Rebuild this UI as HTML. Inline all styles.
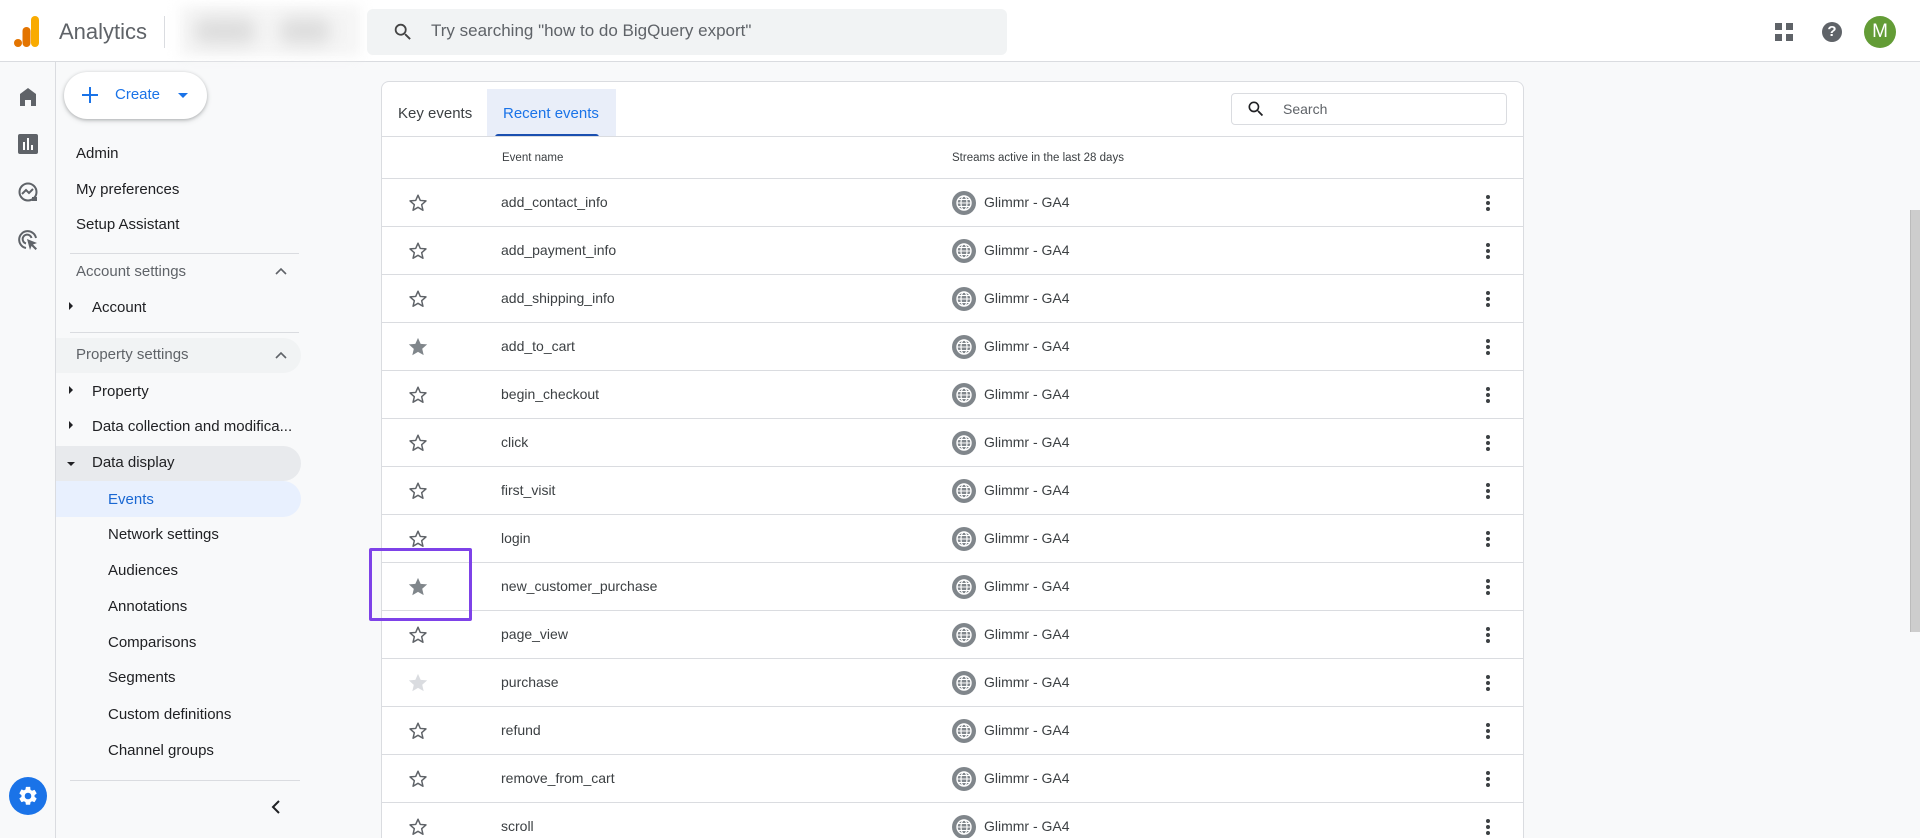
<!DOCTYPE html>
<html style="width:1920px;height:838px;overflow:hidden"><head><meta charset="utf-8"><style>
*{box-sizing:border-box;margin:0;padding:0}
body{width:1920px;height:838px;overflow:hidden;background:#f8f9fa;font-family:"Liberation Sans",Arial,sans-serif;color:#202124;position:relative}
.abs{position:absolute}
#hdr{left:0;top:0;width:1920px;height:62px;background:#fff;border-bottom:1px solid #dadce0}
.rail{left:0;top:62px;width:56px;height:776px;border-right:1px solid #dadce0;background:#f8f9fa}
.mi{position:absolute;left:76px;font-size:15px;color:#202124;line-height:20px}
.sub{left:92px}.subsub{left:108px}
.gr{color:#5f6368}
.arr{position:absolute;left:69px;width:0;height:0}
.div{position:absolute;left:70px;width:229px;height:1px;background:#dadce0}
.card{left:381px;top:81px;width:1143px;height:757px;background:#fff;border:1px solid #dadce0;border-bottom:none;border-radius:8px 8px 0 0;overflow:hidden}
.row{position:absolute;left:0;width:1141px;height:48px;border-top:1px solid #dadce0}
.row .st{position:absolute;left:25px;top:13px}
.row .nm{position:absolute;left:119px;top:15px;font-size:14px;color:#3c4043}
.row .gl{position:absolute;left:570px;top:12px}
.row .sn{position:absolute;left:602px;top:15px;font-size:14px;color:#3c4043}
.row .kb{position:absolute;left:1103px;top:14px}
</style></head><body>
<div id="hdr" class="abs">
  <svg class="abs" style="left:14px;top:16px" width="26" height="32" viewBox="0 0 26 32"><rect x="17" y="0" width="8" height="31" rx="4" fill="#f9ab00"/><rect x="8.5" y="11" width="8" height="20" rx="4" fill="#e37400"/><circle cx="4" cy="27" r="4" fill="#e37400"/></svg>
  <div class="abs" style="left:59px;top:19px;font-size:22px;color:#5f6368">Analytics</div>
  <div class="abs" style="left:164px;top:16px;width:1px;height:32px;background:#dadce0"></div>
  <div class="abs" style="left:180px;top:6px;width:180px;height:50px;background:#f5f5f5;filter:blur(6px)"></div>
  <div class="abs" style="left:195px;top:18px;width:60px;height:26px;background:#ddd;filter:blur(8px);border-radius:10px"></div>
  <div class="abs" style="left:280px;top:18px;width:50px;height:26px;background:#ddd;filter:blur(8px);border-radius:10px"></div>
  <div class="abs" style="left:367px;top:9px;width:640px;height:46px;background:#f1f3f4;border-radius:6px"></div>
  <svg class="abs" style="left:392px;top:21px" width="22" height="22" viewBox="0 0 24 24"><path fill="#444" d="M15.5 14h-.79l-.28-.27A6.47 6.47 0 0016 9.5 6.5 6.5 0 109.5 16c1.61 0 3.09-.59 4.23-1.57l.27.28v.79l5 4.99L20.49 19l-4.99-5zm-6 0C7.01 14 5 11.99 5 9.5S7.01 5 9.5 5 14 7.01 14 9.5 11.99 14 9.5 14z"/></svg>
  <div class="abs" style="left:431px;top:21px;font-size:17px;color:#5f6368">Try searching "how to do BigQuery export"</div>
  <svg class="abs" style="left:1774px;top:22px" width="20" height="20" viewBox="0 0 20 20"><rect x="1" y="1" width="7" height="7" fill="#5f6368"/><rect x="12" y="1" width="7" height="7" fill="#5f6368"/><rect x="1" y="12" width="7" height="7" fill="#5f6368"/><rect x="12" y="12" width="7" height="7" fill="#5f6368"/></svg>
  <div class="abs" style="left:1822px;top:22px;width:20px;height:20px;border-radius:50%;background:#5f6368;color:#fff;font-size:15px;font-weight:bold;text-align:center;line-height:20px">?</div>
  <div class="abs" style="left:1864px;top:16px;width:32px;height:32px;border-radius:50%;background:#639c36;color:#fff;font-size:19px;text-align:center;line-height:32px">M</div>
</div>
<div class="abs rail">
  <svg class="abs" style="left:18px;top:25px" width="20" height="20" viewBox="0 0 20 20"><path fill="#5f6368" d="M10 1L2 7v12h5v-6h6v6h5V7z"/></svg>
  <svg class="abs" style="left:18px;top:72px" width="20" height="20" viewBox="0 0 20 20"><rect x="0" y="0" width="20" height="20" rx="2" fill="#5f6368"/><rect x="5" y="8" width="2" height="8" fill="#fff"/><rect x="9" y="4" width="2" height="12" fill="#fff"/><rect x="13" y="11" width="2" height="5" fill="#fff"/></svg>
  <svg class="abs" style="left:17px;top:119px" width="22" height="22" viewBox="0 0 22 22"><circle cx="11" cy="11" r="8.5" fill="none" stroke="#5f6368" stroke-width="2"/><path d="M5 13l4-4 3 3 4-4" fill="none" stroke="#5f6368" stroke-width="2"/><rect x="15" y="16" width="5" height="4" fill="#5f6368"/></svg>
  <svg class="abs" style="left:17px;top:167px" width="22" height="22" viewBox="0 0 22 22"><path d="M19 9A8.5 8.5 0 1 0 9 19" fill="none" stroke="#5f6368" stroke-width="2"/><path d="M14.5 9A4.5 4.5 0 1 0 9 14.5" fill="none" stroke="#5f6368" stroke-width="2"/><path fill="#5f6368" d="M10 10l10 4-4 1.5 4 4-1.5 1.5-4-4L13 21z"/></svg>
  <div class="abs" style="left:9px;top:715px;width:38px;height:38px;border-radius:50%;background:#1a73e8"></div>
  <svg class="abs" style="left:17px;top:723px" width="22" height="22" viewBox="0 0 24 24"><path fill="#fff" d="M19.14 12.94a7.07 7.07 0 000-1.88l2.03-1.58a.49.49 0 00.12-.61l-1.920-3.32a.49.49 0 00-.59-.22l-2.39.96a7.03 7.03 0 00-1.62-.94l-.36-2.54A.48.48 0 0013.93 2h-3.84a.48.48 0 00-.48.41l-.36 2.54c-.59.24-1.13.57-1.62.94l-2.39-.96a.48.48 0 00-.59.22L2.73 8.870a.48.48 0 00.12.61l2.03 1.58a7.07 7.07 0 000 1.88l-2.03 1.58a.49.49 0 00-.12.61l1.92 3.32c.12.22.37.29.59.22l2.39-.96c.5.38 1.03.7 1.62.94l.36 2.54c.05.24.24.41.48.41h3.84c.24 0 .44-.17.47-.41l.36-2.54c.59-.24 1.13-.56 1.62-.94l2.39.96c.22.08.47 0 .59-.22l1.92-3.32a.49.49 0 00-.12-.61l-2.010-1.58zM12 15.6A3.6 3.6 0 1112 8.4a3.6 3.6 0 010 7.2z"/></svg>
</div>
<div class="abs" style="left:64px;top:72px;width:143px;height:47px;background:#fff;border-radius:24px;box-shadow:0 1px 3px rgba(60,64,67,.3),0 2px 6px rgba(60,64,67,.15)"></div>
<svg class="abs" style="left:81px;top:86px" width="18" height="18" viewBox="0 0 18 18"><path d="M9 1v16M1 9h16" stroke="#1a73e8" stroke-width="2"/></svg>
<div class="abs" style="left:115px;top:86px;font-size:15px;color:#1a73e8">Create</div>
<div class="abs" style="left:178px;top:93px;width:0;height:0;border-left:5px solid transparent;border-right:5px solid transparent;border-top:5px solid #1a73e8"></div>

<div class="abs" style="left:56px;top:338px;width:245px;height:35px;background:#f1f3f4;border-radius:0 18px 18px 0"></div>
<div class="abs" style="left:56px;top:446px;width:245px;height:35px;background:#e8eaed;border-radius:0 18px 18px 0"></div>
<div class="abs" style="left:56px;top:481px;width:245px;height:36px;background:#e8f0fe;border-radius:0 18px 18px 0"></div>

<div class="mi" style="top:144px">Admin</div>
<div class="mi" style="top:180px">My preferences</div>
<div class="mi" style="top:215px">Setup Assistant</div>
<div class="div" style="top:253px"></div>
<div class="mi gr" style="top:262px">Account settings</div>
<svg class="abs" style="left:275px;top:267px" width="12" height="8" viewBox="0 0 12 8"><path d="M1 7l5-5 5 5" fill="none" stroke="#5f6368" stroke-width="1.6"/></svg>
<div class="arr" style="top:302px;border-top:4px solid transparent;border-bottom:4px solid transparent;border-left:4px solid #202124"></div>
<div class="mi sub" style="top:298px">Account</div>
<div class="div" style="top:332px"></div>
<div class="mi gr" style="top:345px">Property settings</div>
<svg class="abs" style="left:275px;top:351px" width="12" height="8" viewBox="0 0 12 8"><path d="M1 7l5-5 5 5" fill="none" stroke="#5f6368" stroke-width="1.6"/></svg>
<div class="arr" style="top:386px;border-top:4px solid transparent;border-bottom:4px solid transparent;border-left:4px solid #202124"></div>
<div class="mi sub" style="top:382px">Property</div>
<div class="arr" style="top:421px;border-top:4px solid transparent;border-bottom:4px solid transparent;border-left:4px solid #202124"></div>
<div class="mi sub" style="top:417px">Data collection and modifica...</div>
<div class="arr" style="top:462px;left:67px;border-left:4px solid transparent;border-right:4px solid transparent;border-top:4px solid #202124"></div>
<div class="mi sub" style="top:453px">Data display</div>
<div class="mi subsub" style="top:490px;color:#1967d2">Events</div>
<div class="mi subsub" style="top:525px">Network settings</div>
<div class="mi subsub" style="top:561px">Audiences</div>
<div class="mi subsub" style="top:597px">Annotations</div>
<div class="mi subsub" style="top:633px">Comparisons</div>
<div class="mi subsub" style="top:668px">Segments</div>
<div class="mi subsub" style="top:705px">Custom definitions</div>
<div class="mi subsub" style="top:741px">Channel groups</div>
<div class="div" style="top:780px;width:230px"></div>
<svg class="abs" style="left:270px;top:799px" width="12" height="16" viewBox="0 0 12 16"><path d="M9 2L3 8l6 6" fill="none" stroke="#202124" stroke-width="2"/></svg>

<div class="abs card">
  <div class="abs" style="left:16px;top:23px;font-size:15px;color:#3c4043">Key events</div>
  <div class="abs" style="left:105px;top:7px;width:129px;height:48px;background:#e9eef9"></div>
  <div class="abs" style="left:121px;top:23px;font-size:15px;color:#1a73e8">Recent events</div>
  <div class="abs" style="left:113px;top:52px;width:104px;height:3px;background:#1a4fb0;border-radius:3px 3px 0 0"></div>
  <div class="abs" style="left:849px;top:11px;width:276px;height:32px;border:1px solid #dadce0;border-radius:4px"></div>
  <svg class="abs" style="left:864px;top:17px" width="20" height="20" viewBox="0 0 24 24"><path fill="#202124" d="M15.5 14h-.79l-.28-.27A6.47 6.47 0 0016 9.5 6.5 6.5 0 109.5 16c1.61 0 3.09-.59 4.23-1.57l.27.28v.79l5 4.99L20.49 19l-4.99-5zm-6 0C7.01 14 5 11.99 5 9.5S7.01 5 9.5 5 14 7.01 14 9.5 11.99 14 9.5 14z"/></svg>
  <div class="abs" style="left:901px;top:19px;font-size:14px;color:#5f6368">Search</div>
  <div class="abs" style="left:0;top:54px;width:1141px;height:1px;background:#dadce0"></div>
  <div class="abs" style="left:120px;top:70px;font-size:11.5px;color:#3c4043">Event name</div>
  <div class="abs" style="left:570px;top:70px;font-size:11.5px;color:#3c4043">Streams active in the last 28 days</div>
  <div id="rows"></div>
</div>
<div class="abs" style="left:369px;top:548px;width:103px;height:73px;border:3px solid #7e42e8;border-radius:2px"></div>
<div class="abs" style="left:1910px;top:210px;width:10px;height:422px;background:#cdcdcd;border-left:1px solid #bbb"></div>

<svg width="0" height="0" style="position:absolute"><defs>
<path id="star" d="M12 2l2.9 6.6 7.1.6-5.4 4.7 1.6 7L12 17.3 5.8 21l1.6-7L2 9.2l7.1-.6z"/>
</defs></svg>
<script>
var names=[["add_contact_info",0],["add_payment_info",0],["add_shipping_info",0],["add_to_cart",1],["begin_checkout",0],["click",0],["first_visit",0],["login",0],["new_customer_purchase",1],["page_view",0],["purchase",2],["refund",0],["remove_from_cart",0],["scroll",0]];
var h="";
names.forEach(function(n,i){
 var st=n[1]==0?'<path d="M12 3.5l2.5 5.7 6.2.5-4.7 4.1 1.4 6.1L12 16.7 6.6 19.9 8 13.8 3.3 9.7l6.2-.5z" fill="none" stroke="#5f6368" stroke-width="1.6" stroke-linejoin="round"/>':'<use href="#star" fill="'+(n[1]==1?'#80868b':'#dadce0')+'"/>';
 h+='<div class="row" style="top:'+(96+48*i)+'px"><svg class="st" width="22" height="22" viewBox="0 0 24 24">'+st+'</svg><div class="nm">'+n[0]+'</div>'+
 '<svg class="gl" width="24" height="24" viewBox="0 0 24 24"><circle cx="12" cy="12" r="12" fill="#80868b"/><circle cx="12" cy="12" r="7" fill="none" stroke="#fff" stroke-width="1.4"/><ellipse cx="12" cy="12" rx="3" ry="7" fill="none" stroke="#fff" stroke-width="1.2"/><path d="M5 12h14M6 8.5h12M6 15.5h12" stroke="#fff" stroke-width="1.1"/></svg>'+
 '<div class="sn">Glimmr - GA4</div><svg class="kb" width="6" height="20" viewBox="0 0 6 20"><circle cx="3" cy="4" r="2" fill="#3c4043"/><circle cx="3" cy="10" r="2" fill="#3c4043"/><circle cx="3" cy="16" r="2" fill="#3c4043"/></svg></div>';
});
document.getElementById("rows").innerHTML=h;
</script>
</body></html>
